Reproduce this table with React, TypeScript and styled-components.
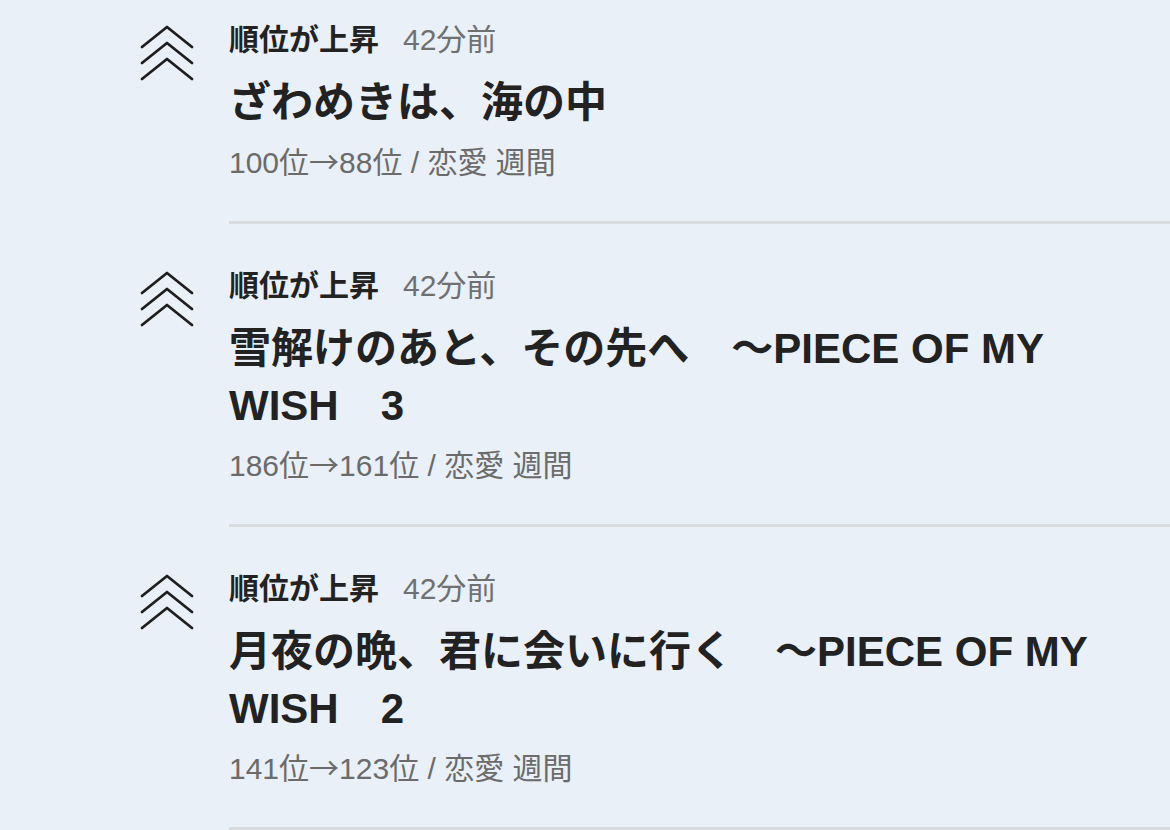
import styled, { createGlobalStyle } from "styled-components";

const GlobalStyle = createGlobalStyle`
  html, body {
    margin: 0;
    padding: 0;
    background: #eaf0f7;
  }
  body {
    font-family: "Liberation Sans", "Noto Sans CJK JP", sans-serif;
    color: #222;
  }
`;

const List = styled.ul`
  list-style: none;
  margin: 0;
  padding: 0;
  width: 1170px;
  background: #eaf0f7;
`;

const Item = styled.li`
  display: flex;
  align-items: flex-start;
  padding-top: 42px;
  padding-left: 140px;
  &:first-child {
    padding-top: 20px;
  }
`;

const IconCell = styled.div`
  flex: 0 0 54px;
  height: 58px;
  margin-top: 4px;
  svg {
    display: block;
  }
`;

const Body = styled.div`
  flex: 1;
  margin-left: 35px;
  padding-bottom: 38px;
  border-bottom: 3px solid #d8dcdf;
`;

const Header = styled.div`
  display: flex;
  align-items: center;
  gap: 24px;
  font-size: 30px;
  line-height: 40px;
`;

const Label = styled.span`
  font-weight: 700;
  color: #222;
`;

const Time = styled.span`
  color: #707070;
`;

const Title = styled.h2`
  margin: 14px 0 0;
  padding-right: 12px;
  font-size: 42px;
  line-height: 57px;
  font-weight: 700;
  color: #222;
`;

const Meta = styled.div`
  margin-top: 12px;
  height: 40px;
  font-size: 30px;
  line-height: 40px;
  color: #6b6b6b;
  white-space: nowrap;
`;

const Arrow = styled.span`
  font-family: "Noto Sans CJK JP", sans-serif;
  line-height: 1;
`;

const RankUpIcon = () => (
  <svg width="54" height="58" viewBox="0 0 54 58" fill="none">
    {[0, 16, 32].map((dy) => (
      <polyline
        key={dy}
        points={`2,${23 + dy} 27,${3 + dy} 52,${23 + dy}`}
        stroke="#1e1e1e"
        strokeWidth="2.8"
        strokeLinecap="round"
        strokeLinejoin="round"
      />
    ))}
  </svg>
);

const rankings = [
  {
    title: "ざわめきは、海の中",
    from: 100,
    to: 88,
  },
  {
    title: "雪解けのあと、その先へ　～PIECE OF MY WISH　3",
    from: 186,
    to: 161,
  },
  {
    title: "月夜の晩、君に会いに行く　～PIECE OF MY WISH　2",
    from: 141,
    to: 123,
  },
];

const App = () => {
  return (
    <>
      <GlobalStyle />
      <List>
        {rankings.map((r) => (
          <Item key={r.title}>
            <IconCell>
              <RankUpIcon />
            </IconCell>
            <Body>
              <Header>
                <Label>順位が上昇</Label>
                <Time>42分前</Time>
              </Header>
              <Title>{r.title}</Title>
              <Meta>
                {r.from}位<Arrow>→</Arrow>{r.to}位 / 恋愛 週間
              </Meta>
            </Body>
          </Item>
        ))}
      </List>
    </>
  );
};

export default App;
